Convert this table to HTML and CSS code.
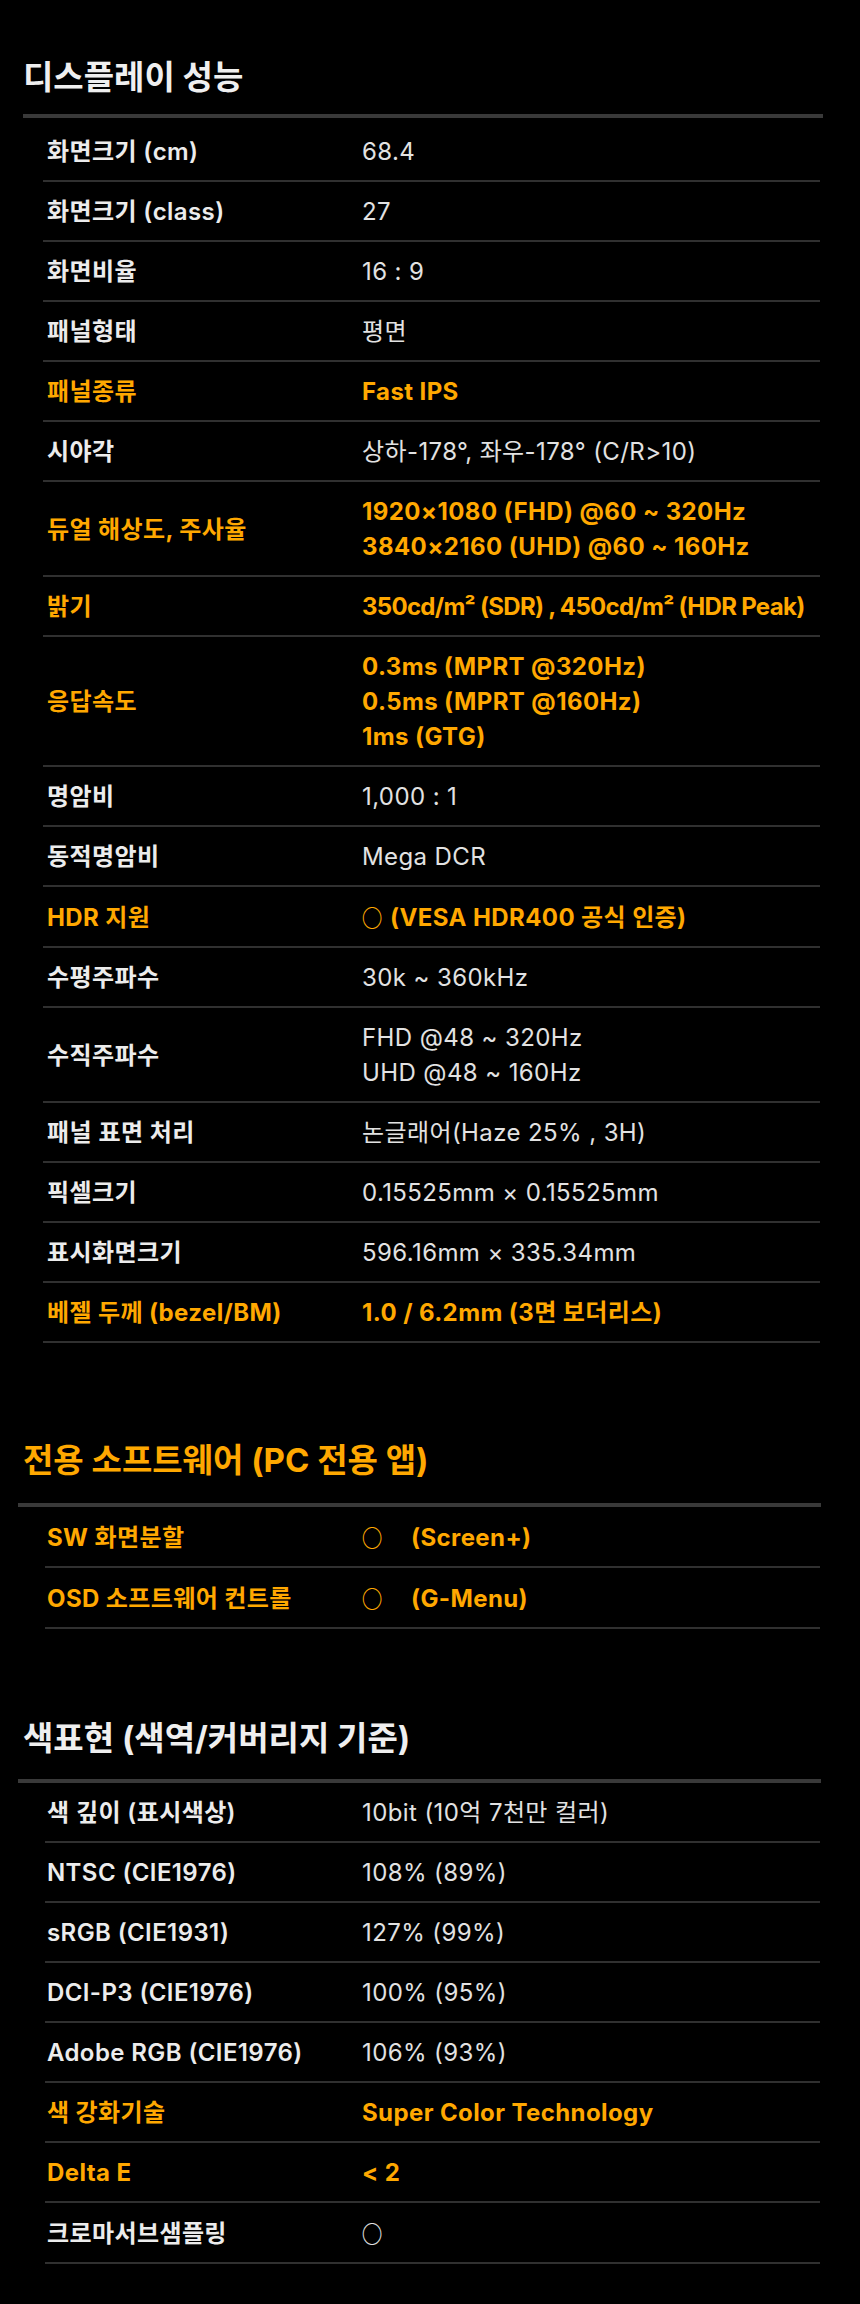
FILE: index.html
```html
<!DOCTYPE html>
<html lang="ko">
<head>
<meta charset="utf-8">
<title>디스플레이 사양</title>
<link rel="stylesheet" href="styles.css">
</head>
<body>
<main class="page">
  <section class="spec spec-display">
    <h2 class="spec-title">디스플레이 성능</h2>
    <div class="spec-list">
      <div class="spec-row"><div class="spec-label">화면크기 (cm)</div><div class="spec-value">68.4</div></div>
      <div class="spec-row"><div class="spec-label">화면크기 (class)</div><div class="spec-value">27</div></div>
      <div class="spec-row"><div class="spec-label">화면비율</div><div class="spec-value">16 : 9</div></div>
      <div class="spec-row"><div class="spec-label">패널형태</div><div class="spec-value">평면</div></div>
      <div class="spec-row hl"><div class="spec-label">패널종류</div><div class="spec-value">Fast IPS</div></div>
      <div class="spec-row"><div class="spec-label">시야각</div><div class="spec-value">상하-178°, 좌우-178° (C/R&gt;10)</div></div>
      <div class="spec-row hl"><div class="spec-label">듀얼 해상도, 주사율</div><div class="spec-value"><p>1920×1080 (FHD) @60 ~ 320Hz</p><p>3840×2160 (UHD) @60 ~ 160Hz</p></div></div>
      <div class="spec-row hl"><div class="spec-label">밝기</div><div class="spec-value spec-value-tight">350cd/m² (SDR) , 450cd/m² (HDR Peak)</div></div>
      <div class="spec-row hl"><div class="spec-label">응답속도</div><div class="spec-value"><p>0.3ms (MPRT @320Hz)</p><p>0.5ms (MPRT @160Hz)</p><p>1ms (GTG)</p></div></div>
      <div class="spec-row"><div class="spec-label">명암비</div><div class="spec-value">1,000 : 1</div></div>
      <div class="spec-row"><div class="spec-label">동적명암비</div><div class="spec-value">Mega DCR</div></div>
      <div class="spec-row hl"><div class="spec-label">HDR 지원</div><div class="spec-value"><span class="mark">○</span> (VESA HDR400 공식 인증)</div></div>
      <div class="spec-row"><div class="spec-label">수평주파수</div><div class="spec-value">30k ~ 360kHz</div></div>
      <div class="spec-row"><div class="spec-label">수직주파수</div><div class="spec-value"><p>FHD @48 ~ 320Hz</p><p>UHD @48 ~ 160Hz</p></div></div>
      <div class="spec-row"><div class="spec-label">패널 표면 처리</div><div class="spec-value">논글래어(Haze 25% , 3H)</div></div>
      <div class="spec-row"><div class="spec-label">픽셀크기</div><div class="spec-value">0.15525mm × 0.15525mm</div></div>
      <div class="spec-row"><div class="spec-label">표시화면크기</div><div class="spec-value">596.16mm × 335.34mm</div></div>
      <div class="spec-row hl"><div class="spec-label">베젤 두께 (bezel/BM)</div><div class="spec-value">1.0 / 6.2mm (3면 보더리스)</div></div>
    </div>
  </section>

  <section class="spec spec-soft">
    <h2 class="spec-title title-hl">전용 소프트웨어 (PC 전용 앱)</h2>
    <div class="spec-list">
      <div class="spec-row hl"><div class="spec-label">SW 화면분할</div><div class="spec-value"><span class="mark mark-gap">○</span>(Screen+)</div></div>
      <div class="spec-row hl"><div class="spec-label">OSD 소프트웨어 컨트롤</div><div class="spec-value"><span class="mark mark-gap">○</span>(G-Menu)</div></div>
    </div>
  </section>

  <section class="spec spec-color">
    <h2 class="spec-title">색표현 (색역/커버리지 기준)</h2>
    <div class="spec-list">
      <div class="spec-row"><div class="spec-label">색 깊이 (표시색상)</div><div class="spec-value">10bit (10억 7천만 컬러)</div></div>
      <div class="spec-row"><div class="spec-label">NTSC (CIE1976)</div><div class="spec-value">108% (89%)</div></div>
      <div class="spec-row"><div class="spec-label">sRGB (CIE1931)</div><div class="spec-value">127% (99%)</div></div>
      <div class="spec-row"><div class="spec-label">DCI-P3 (CIE1976)</div><div class="spec-value">100% (95%)</div></div>
      <div class="spec-row"><div class="spec-label">Adobe RGB (CIE1976)</div><div class="spec-value">106% (93%)</div></div>
      <div class="spec-row hl"><div class="spec-label">색 강화기술</div><div class="spec-value">Super Color Technology</div></div>
      <div class="spec-row hl"><div class="spec-label">Delta E</div><div class="spec-value">&lt; 2</div></div>
      <div class="spec-row"><div class="spec-label">크로마서브샘플링</div><div class="spec-value"><span class="mark">○</span></div></div>
    </div>
  </section>
</main>
</body>
</html>
```

FILE: styles.css
```css
html, body {
  margin: 0;
  padding: 0;
  background: #000;
}

body {
  font-family: Inter, "Noto Sans CJK KR", "Noto Sans", sans-serif;
  color: #ededed;
  width: 860px;
}

.page {
  display: flex;
  flex-direction: column;
  padding-bottom: 40px;
}

.spec-title {
  margin: 0;
  font-size: 33px;
  line-height: 40px;
  font-weight: 700;
  color: #efefef;
  border-bottom: 4px solid #393939;
}

.title-hl {
  color: #ffa800;
}

.spec-list {
  display: flex;
  flex-direction: column;
}

.spec-row {
  display: grid;
  grid-template-columns: 315px 1fr;
  align-items: center;
  padding: 12px 0 11px 4px;
  border-bottom: 2px solid #303030;
  font-size: 24px;
  line-height: 35px;
  letter-spacing: 0.4px;
}

.spec-label {
  font-weight: 600;
  color: #ececec;
}

.spec-value {
  font-weight: 400;
  color: #e2e2e2;
  white-space: nowrap;
}

.spec-value-tight {
  letter-spacing: -0.7px;
}

.spec-value p {
  margin: 0;
}

.hl .spec-label,
.hl .spec-value {
  color: #ffa800;
  font-weight: 700;
}

.mark {
  display: inline-block;
  margin: 0 0 0 -2px;
  font-family: "Noto Sans CJK KR", sans-serif;
  font-size: 24px;
  font-weight: 700;
  letter-spacing: 0;
  vertical-align: -1px;
  transform: scaleX(0.86);
}

.mark-gap {
  margin-right: 27px;
}

/* section 1 */
.spec-display {
  margin-left: 23px;
  width: 800px;
  padding-top: 57px;
}

.spec-display .spec-title {
  padding: 0 0 17px 0;
}

.spec-display .spec-list {
  padding-top: 4px;
  margin: 0 3px 0 20px;
}

/* section 2 */
.spec-soft {
  margin: 97px 0 0 18px;
  width: 803px;
}

.spec-soft .spec-title {
  padding: 0 0 23px 5px;
}

.spec-soft .spec-list,
.spec-color .spec-list {
  margin: 0 1px 0 27px;
}

.spec-soft .spec-row,
.spec-color .spec-row {
  padding-left: 2px;
}

/* section 3 */
.spec-color {
  margin: 89px 0 0 18px;
  width: 803px;
}

.spec-color .spec-title {
  padding: 0 0 21px 5px;
}
```
